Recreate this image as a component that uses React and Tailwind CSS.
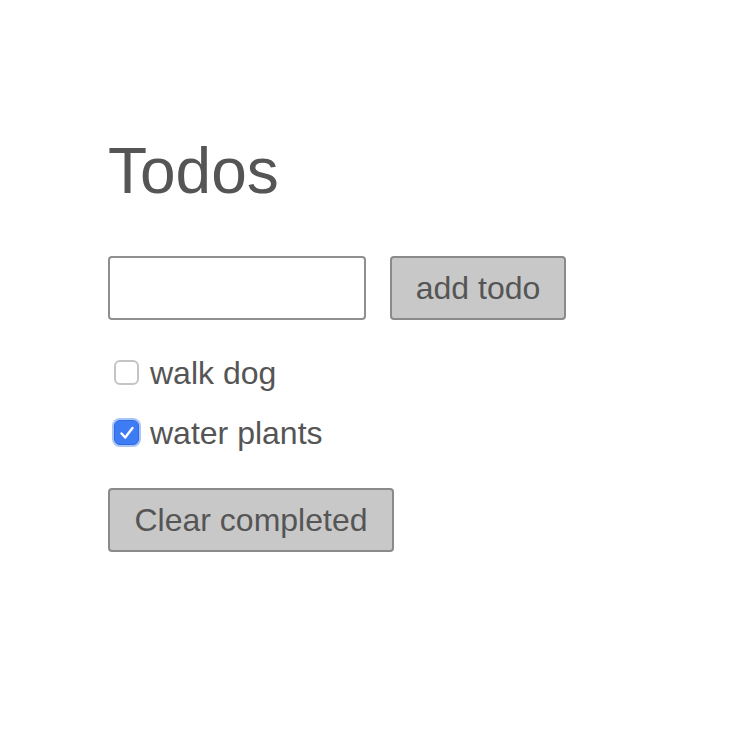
import { useState } from "react";

function Check({ checked, onChange }) {
  return (
    <button
      onClick={onChange}
      className={
        checked
          ? "w-[29px] h-[29px] rounded-[8px] bg-[#a9c4f7] flex items-center justify-center"
          : "w-[29px] h-[29px] flex items-center justify-center"
      }
    >
      {checked ? (
        <span className="w-[25px] h-[25px] rounded-[6px] bg-[#3d7cf5] border border-[#2f6ae0] flex items-center justify-center">
          <svg width="20" height="20" viewBox="0 0 20 20" fill="none">
            <path d="M4.5 10.5l3.7 4L15.5 5" stroke="white" strokeWidth="2.4" strokeLinecap="round" strokeLinejoin="round" />
          </svg>
        </span>
      ) : (
        <span className="w-[25px] h-[25px] rounded-[6px] bg-white border-2 border-[#c4c4c4]" />
      )}
    </button>
  );
}

export default function App() {
  const [todos, setTodos] = useState([
    { text: "walk dog", done: false },
    { text: "water plants", done: true },
  ]);
  const [text, setText] = useState("");

  function toggle(i) {
    setTodos(todos.map((t, j) => (j === i ? { ...t, done: !t.done } : t)));
  }

  return (
    <div className="min-h-screen bg-white text-[#555555] font-['Liberation_Sans',Arial,sans-serif] pl-[108px] pt-[139px]">
      <h1 className="text-[64px] leading-none">Todos</h1>

      <div className="flex gap-[24px] mt-[53px]">
        <input
          className="w-[258px] h-[64px] border-2 border-[#8f8f8f] rounded-[4px] px-2 text-[32px] outline-none"
          value={text}
          onChange={(e) => setText(e.target.value)}
        />
        <button
          onClick={() => {
            if (text) setTodos([...todos, { text, done: false }]);
            setText("");
          }}
          className="w-[176px] h-[64px] bg-[#c8c8c8] border-2 border-[#8a8a8a] rounded-[4px] text-[32px]"
        >
          add todo
        </button>
      </div>

      <div className="mt-[34px] flex flex-col gap-[23px]">
        {todos.map((t, i) => (
          <div key={i} className="flex items-center gap-[9px] h-[37px] pl-[4px]">
            <Check checked={t.done} onChange={() => toggle(i)} />
            <span className="text-[32px] leading-none">{t.text}</span>
          </div>
        ))}
      </div>

      <button
        onClick={() => setTodos(todos.filter((t) => !t.done))}
        className="mt-[37px] w-[286px] h-[64px] bg-[#c8c8c8] border-2 border-[#8a8a8a] rounded-[4px] text-[32px]"
      >
        Clear completed
      </button>
    </div>
  );
}
